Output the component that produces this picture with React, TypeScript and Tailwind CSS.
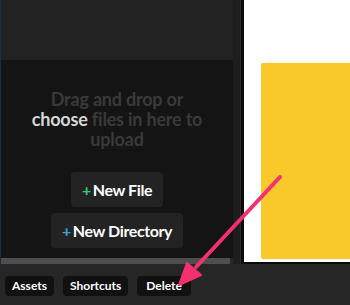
import React from "react";

const font = { fontFamily: "Lato, 'Open Sans', sans-serif" };

export default function App() {
  return (
    <div
      className="relative flex flex-col w-[350px] h-[305px] overflow-hidden bg-[#262626]"
      style={font}
    >
      <div className="flex h-[264px]">
        {/* file panel */}
        <div className="flex flex-col w-[233px] border-l border-[#1c2a4a]">
          <div className="h-[60px] bg-[#222222]" />
          <div className="flex-1 flex flex-col items-center bg-[#141414] pt-[29px]">
            <p className="text-[18px] leading-[20px] font-bold text-center text-[#3a3a3a] tracking-[-0.2px]">
              Drag and drop or
              <br />
              <span className="text-[#d6d6d6]">choose</span> files in here to
              <br />
              upload
            </p>
            <button className="mt-[23px] h-[35px] px-[11px] rounded bg-[#232323] text-[16px] font-bold text-white tracking-[-0.4px]">
              <span className="text-[#2ecc71] mr-[2px]">+</span>New File
            </button>
            <button className="mt-[6px] h-[35px] px-[11px] rounded bg-[#232323] text-[16px] font-bold text-white tracking-[-0.4px]">
              <span className="text-[#3aa3d8] mr-[2px]">+</span>New Directory
            </button>
          </div>
          <div className="h-[6px] w-[229px] bg-[#4e4e4e]" />
        </div>
        <div className="w-[8px] bg-[#1d1d1d] border-r border-[#2c2c2c]" />
        <div className="w-[3px] bg-[#0a0a0a]" />
        {/* preview */}
        <div className="flex-1 bg-white pl-[17px] pt-[3px] pb-[3px] border-b-2 border-[#0a0a0a]">
          <div className="h-[60px]" />
          <div className="h-[196px] bg-[#f9c82b] rounded-l-[2px]" />
        </div>
      </div>
      {/* bottom bar */}
      <div className="flex items-center gap-[9px] pl-[5px] pt-[2px] flex-1">
        <button className="h-[20px] px-[7px] rounded bg-[#111111] text-[12px] font-bold text-white">
          Assets
        </button>
        <button className="h-[20px] px-[7px] rounded bg-[#111111] text-[12px] font-bold text-white">
          Shortcuts
        </button>
        <button className="h-[20px] px-[9px] rounded bg-[#111111] text-[12px] font-bold text-white">
          Delete
        </button>
      </div>
      {/* annotation arrow */}
      <svg
        className="absolute inset-0 pointer-events-none"
        width="350"
        height="305"
        viewBox="0 0 350 305"
      >
        <line
          x1="280"
          y1="177"
          x2="196"
          y2="267"
          stroke="#f5306f"
          strokeWidth="4"
          strokeLinecap="round"
        />
        <path
          d="M179 285 L187 263 L201 275 Z"
          fill="#f5306f"
          stroke="#f5306f"
          strokeWidth="2"
          strokeLinejoin="round"
        />
      </svg>
    </div>
  );
}
